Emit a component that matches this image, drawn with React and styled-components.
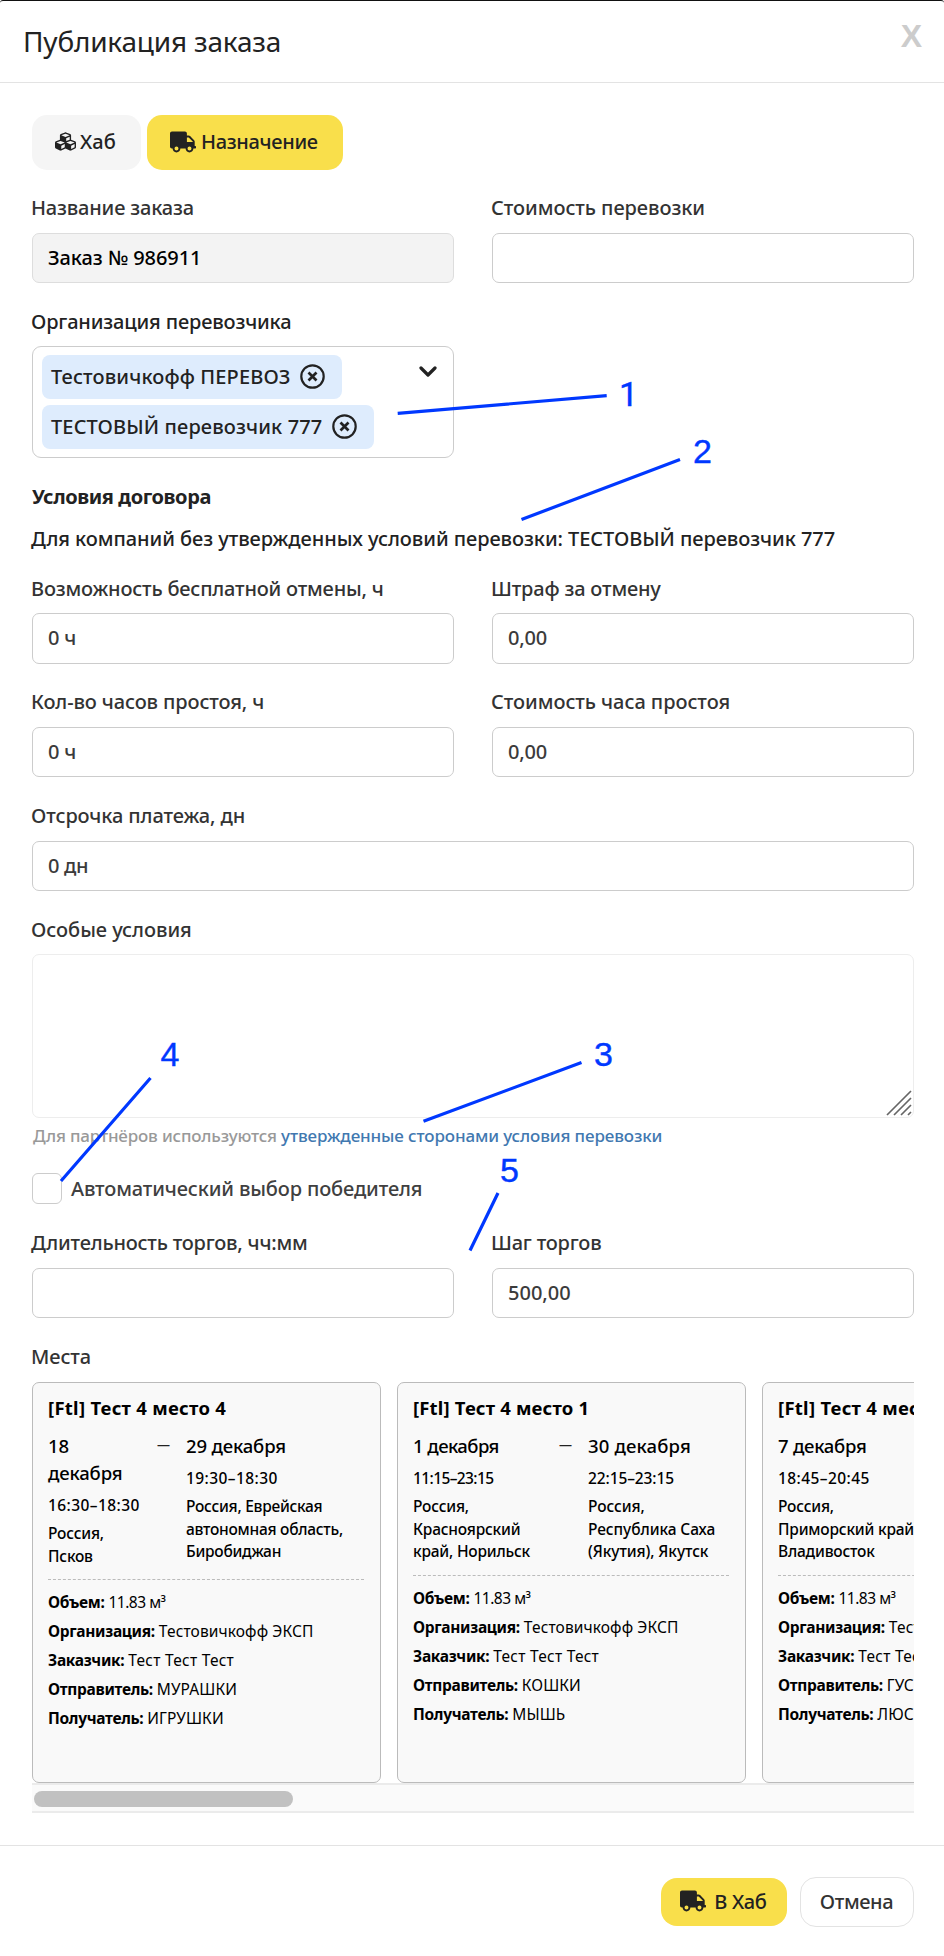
import React from "react";
import styled, { createGlobalStyle, css } from "styled-components";
import { FaCubes, FaTruck } from "react-icons/fa";

const GlobalStyle = createGlobalStyle`
  *, *::before, *::after { box-sizing: border-box; }
  body {
    margin: 0;
    background: #fff;
    color: #333;
    font-family: "Noto Sans", "Open Sans", sans-serif;
    font-weight: 500;
  }
`;

const tracked = css`
  letter-spacing: ${({ $ls = -0.17 }) => $ls}px;
  white-space: nowrap;
`;

const Modal = styled.main`
  position: relative;
  width: 944px;
  height: 1956px;
  border-top: 1px solid #111;
  border-radius: 3px 3px 0 0;
  overflow: hidden;
`;

const Header = styled.header`
  display: flex;
  justify-content: space-between;
  align-items: flex-start;
  height: 82px;
  padding: 12px 22px 0 23px;
  border-bottom: 1px solid #e3e3e3;
`;

const Title = styled.h1`
  margin: 0;
  font-size: 28px;
  font-weight: 400;
  line-height: 56px;
  color: #222;
  letter-spacing: -0.2px;
`;

const CloseButton = styled.button`
  padding: 0;
  border: 0;
  background: none;
  font: 700 32px/46px "Liberation Sans", Arial, sans-serif;
  color: #ccc;
`;

const Body = styled.section`
  display: flex;
  flex-direction: column;
  padding: 32px 30px 32px 32px;
`;

const Tabs = styled.div`
  display: flex;
  gap: 6px;
`;

const Tab = styled.button`
  display: flex;
  align-items: center;
  justify-content: flex-start;
  gap: ${({ $gap }) => $gap}px;
  width: ${({ $width }) => $width}px;
  height: 55px;
  padding: 0 0 2px 23px;
  border: 0;
  border-radius: 15px;
  background: ${({ $active }) => ($active ? "#f9df4b" : "#f5f5f5")};
  color: #222;
  font: 500 20px "Noto Sans", sans-serif;
  ${tracked}
`;

const Columns = styled.div`
  display: grid;
  grid-template-columns: 422px 422px;
  column-gap: 38px;
  margin-top: ${({ $top = 28 }) => $top}px;
`;

const FieldBox = styled.div`
  display: flex;
  flex-direction: column;
  gap: ${({ $gap = 16 }) => $gap}px;
  margin-top: ${({ $top = 0 }) => $top}px;
`;

const Label = styled.label`
  height: 20px;
  margin-left: -1px;
  font-size: 20px;
  line-height: 22px;
  color: ${({ $dark }) => ($dark ? "#222" : "#333")};
  ${tracked}
`;

const Input = styled.div`
  display: flex;
  align-items: center;
  height: ${({ $height = 50 }) => $height}px;
  padding: 0 15px ${({ $height = 50 }) => ($height > 50 ? 3 : 1)}px;
  border: 1px solid ${({ $disabled }) => ($disabled ? "#ddd" : "#ccc")};
  border-radius: 7px;
  background: ${({ $disabled }) => ($disabled ? "#f3f3f3" : "#fff")};
  color: ${({ $disabled }) => ($disabled ? "#000" : "#3b3b3b")};
  font-size: 20px;
  ${tracked}
`;

const Select = styled.div`
  display: flex;
  justify-content: space-between;
  height: 112px;
  padding: 8px 16px 8px 9px;
  border: 1px solid #ccc;
  border-radius: 9px;
  color: #222;
`;

const Chips = styled.div`
  display: flex;
  flex-direction: column;
  align-items: flex-start;
  gap: 6px;
`;

const Chip = styled.div`
  display: flex;
  align-items: center;
  gap: 10px;
  height: 44px;
  padding: 0 17px 2px 9px;
  border-radius: 8px;
  background: #deecfd;
  font-size: 20px;
  ${tracked}
`;

const Chevron = styled.svg`
  margin-top: 10px;
`;

const Heading = styled.h2`
  height: 20px;
  margin: 28px 0 0;
  font-size: 20px;
  font-weight: 700;
  line-height: 22px;
  color: #222;
  letter-spacing: -0.4px;
`;

const Note = styled.p`
  height: 20px;
  margin: 22px 0 0 -1px;
  font-size: 20px;
  line-height: 22px;
  color: #222;
  white-space: nowrap;
  letter-spacing: -0.06px;
`;

const TextArea = styled.div`
  display: flex;
  justify-content: flex-end;
  align-items: flex-end;
  height: 164px;
  padding: 0 1px 1px 0;
  border: 1px solid #ededed;
  border-radius: 7px;
`;

const Hint = styled.p`
  height: 17px;
  margin: 9px 0 0 1px;
  font-size: 17px;
  line-height: 17px;
  color: #999;
  white-space: nowrap;
  letter-spacing: -0.17px;
`;

const HintLink = styled.a`
  color: #4178b0;
  letter-spacing: -0.12px;
`;

const CheckRow = styled.label`
  display: flex;
  align-items: center;
  gap: 9px;
  height: 31px;
  margin-top: 29px;
  font-size: 20px;
  line-height: 20px;
  color: #404040;
  ${tracked}
`;

const CheckBox = styled.span`
  width: 30px;
  height: 31px;
  border: 1px solid #ccc;
  border-radius: 6px;
`;

const Scroller = styled.div`
  overflow: hidden;
`;

const Cards = styled.div`
  display: flex;
  gap: 16px;
  height: 401px;
`;

const CardBox = styled.article`
  flex: 0 0 349px;
  padding: 11px 16px 0 15px;
  border: 1px solid #bbb;
  border-radius: 7px;
  background: #f9f9f9;
  color: #000;
`;

const CardTitle = styled.h3`
  margin: 0 0 11px;
  font-size: 18.5px;
  font-weight: 700;
  line-height: 27px;
  ${tracked}
`;

const Route = styled.div`
  display: grid;
  grid-template-columns: ${({ $columns }) => $columns};
  padding-bottom: 12px;
  border-bottom: 1px dashed #bbb;
`;

const Dash = styled.span`
  font-size: 13px;
  line-height: 24px;
  color: #222;
`;

const DateLine = styled.div`
  font-size: 18.5px;
  line-height: 27px;
  white-space: pre-line;
  letter-spacing: ${({ $ls = -0.15 }) => $ls}px;
`;

const TimeLine = styled.div`
  margin-top: 7px;
  font-size: 15.5px;
  line-height: 24px;
  ${tracked}
`;

const Address = styled.div`
  margin-top: 5px;
  font-size: 15.5px;
  line-height: 22.7px;
  white-space: pre;
  letter-spacing: ${({ $ls = -0.2 }) => $ls}px;
`;

const Facts = styled.dl`
  margin: 0;
  padding-top: 8px;
`;

const Fact = styled.div`
  display: flex;
  gap: 4px;
  font-size: 15.5px;
  line-height: 29px;
  white-space: nowrap;
`;

const FactName = styled.dt`
  font-weight: 700;
  letter-spacing: -0.31px;
`;

const FactValue = styled.dd`
  margin: 0;
  font-weight: 400;
  letter-spacing: ${({ $ls = 0.12 }) => $ls}px;
`;

const ScrollTrack = styled.div`
  height: 30px;
  padding: 6px 2px;
  border: solid #ebebeb;
  border-width: 2px 0;
  background: #fafafa;
`;

const ScrollThumb = styled.div`
  width: 259px;
  height: 16px;
  border-radius: 8px;
  background: #c1c1c1;
`;

const Footer = styled.footer`
  display: flex;
  justify-content: flex-end;
  align-items: center;
  gap: 13px;
  padding: 31px 30px 0 0;
  border-top: 1px solid #e3e3e3;
`;

const Button = styled.button`
  display: flex;
  align-items: center;
  justify-content: center;
  gap: 8px;
  width: ${({ $primary }) => ($primary ? 126 : 114)}px;
  height: ${({ $primary }) => ($primary ? 48 : 50)}px;
  padding: 0 1px 2px 0;
  border: ${({ $primary }) => ($primary ? "0" : "1px solid #e3e3e3")};
  border-radius: 16px;
  background: ${({ $primary }) => ($primary ? "#f9df4b" : "#fff")};
  color: ${({ $primary }) => ($primary ? "#222" : "#333")};
  font: 500 20px "Noto Sans", sans-serif;
  ${tracked}
`;

const Markup = styled.svg`
  position: absolute;
  top: -1px;
  left: 0;
  pointer-events: none;
  stroke: #0038ff;
  stroke-width: 3.2;
`;

const MarkNumber = styled.text`
  font: 400 34px ${({ $family = "Liberation Sans" }) => `"${$family}"`}, Arial, sans-serif;
  fill: #0038ff;
  stroke: #0038ff;
  stroke-width: 0.4;
`;

function Field({ label, ls, gap, top, height, value, valueLs, disabled }) {
  return (
    <FieldBox $gap={gap} $top={top}>
      <Label $ls={ls}>{label}</Label>
      <Input $height={height} $disabled={disabled} $ls={valueLs}>{value}</Input>
    </FieldBox>
  );
}

function Carrier({ name }) {
  return (
    <Chip $ls={0.13}>
      {name}
      <svg width="25" height="25" viewBox="0 0 25 25" fill="none" stroke="#222">
        <circle cx="12.5" cy="12.5" r="11.2" strokeWidth="2.2" />
        <path d="M8.5 8.5l8 8M16.5 8.5l-8 8" strokeWidth="2.7" />
      </svg>
    </Chip>
  );
}

function Stop({ date, dateLs, time, timeLs, address, addressLs }) {
  return (
    <div>
      <DateLine $ls={dateLs}>{date}</DateLine>
      <TimeLine $ls={timeLs}>{time}</TimeLine>
      <Address $ls={addressLs}>{address}</Address>
    </div>
  );
}

function PlaceCard({ title, titleLs, columns, from, to, customer, sender, receiver }) {
  return (
    <CardBox>
      <CardTitle $ls={titleLs}>{title}</CardTitle>
      <Route $columns={columns}>
        <Stop {...from} />
        {to && <Dash>—</Dash>}
        {to && <Stop {...to} />}
      </Route>
      <Facts>
        <Fact><FactName>Объем:</FactName><FactValue $ls={-0.5}>11.83 м³</FactValue></Fact>
        <Fact><FactName>Организация:</FactName><FactValue>Тестовичкофф ЭКСП</FactValue></Fact>
        <Fact><FactName>Заказчик:</FactName><FactValue $ls={0.25}>{customer}</FactValue></Fact>
        <Fact><FactName>Отправитель:</FactName><FactValue>{sender}</FactValue></Fact>
        <Fact><FactName>Получатель:</FactName><FactValue>{receiver}</FactValue></Fact>
      </Facts>
    </CardBox>
  );
}

const places = [
  {
    title: "[Ftl] Тест 4 место 4",
    titleLs: 0.27,
    columns: "109px 29px 1fr",
    from: { date: "18\nдекабря", time: "16:30–18:30", timeLs: 0.42, address: "Россия,\nПсков" },
    to: { date: "29 декабря", time: "19:30–18:30", timeLs: 0.42, address: "Россия, Еврейская\nавтономная область,\nБиробиджан", addressLs: -0.26 },
    customer: "Тест Тест Тест",
    sender: "МУРАШКИ",
    receiver: "ИГРУШКИ",
  },
  {
    title: "[Ftl] Тест 4 место 1",
    titleLs: 0.17,
    columns: "146px 29px 1fr",
    from: { date: "1 декабря", dateLs: -0.55, time: "11:15–23:15", timeLs: -0.6, address: "Россия,\nКрасноярский\nкрай, Норильск" },
    to: { date: "30 декабря", dateLs: 0.15, time: "22:15–23:15", timeLs: -0.1, address: "Россия,\nРеспублика Саха\n(Якутия), Якутск", addressLs: -0.08 },
    customer: "Тест Тест Тест",
    sender: "КОШКИ",
    receiver: "МЫШЬ",
  },
  {
    title: "[Ftl] Тест 4 место 2",
    titleLs: 0.27,
    columns: "1fr",
    from: { date: "7 декабря", dateLs: -0.25, time: "18:45–20:45", timeLs: 0.42, address: "Россия,\nПриморский край,\nВладивосток" },
    customer: "Тест Тест Тест",
    sender: "ГУСИ",
    receiver: "ЛЮСЯ",
  },
];

export default function App() {
  return (
    <>
      <GlobalStyle />
      <Modal>
        <Header>
          <Title>Публикация заказа</Title>
          <CloseButton>X</CloseButton>
        </Header>
        <Body>
          <Tabs>
            <Tab $width={109} $gap={4} $ls={0.17}><FaCubes size={21} />Хаб</Tab>
            <Tab $width={196} $gap={5} $ls={-0.32} $active><FaTruck size={26} />Назначение</Tab>
          </Tabs>
          <Columns $top={27}>
            <Field label="Название заказа" value="Заказ № 986911" valueLs={-0.08} disabled />
            <Field label="Стоимость перевозки" ls={-0.06} />
          </Columns>
          <Columns>
            <FieldBox $gap={15}>
              <Label $dark $ls={-0.16}>Организация перевозчика</Label>
              <Select>
                <Chips>
                  <Carrier name="Тестовичкофф ПЕРЕВОЗ" />
                  <Carrier name="ТЕСТОВЫЙ перевозчик 777" />
                </Chips>
                <Chevron width="18" height="13" viewBox="0 0 18 13" fill="none" stroke="#222" strokeWidth="3.2" strokeLinecap="round" strokeLinejoin="round">
                  <path d="M2 3l7 7 7-7" />
                </Chevron>
              </Select>
            </FieldBox>
          </Columns>
          <Heading>Условия договора</Heading>
          <Note>Для компаний без утвержденных условий перевозки: ТЕСТОВЫЙ перевозчик 777</Note>
          <Columns $top={30}>
            <Field label="Возможность бесплатной отмены, ч" ls={-0.2} gap={15} height={51} value="0 ч" />
            <Field label="Штраф за отмену" ls={-0.18} gap={15} height={51} value="0,00" />
          </Columns>
          <Columns $top={27}>
            <Field label="Кол-во часов простоя, ч" ls={-0.12} value="0 ч" />
            <Field label="Стоимость часа простоя" ls={-0.06} value="0,00" />
          </Columns>
          <Field top={28} label="Отсрочка платежа, дн" ls={-0.1} value="0 дн" valueLs={-0.35} />
          <FieldBox $top={28} $gap={15}>
            <Label $ls={-0.04}>Особые условия</Label>
            <TextArea>
              <svg width="26" height="26" viewBox="0 0 26 26" stroke="#666" strokeWidth="1.7">
                <path d="M1 25L25 1M8 25L25 8M15 25L25 15M22 25L25 22" />
              </svg>
            </TextArea>
          </FieldBox>
          <Hint>Для партнёров используются <HintLink>утвержденные сторонами условия перевозки</HintLink></Hint>
          <CheckRow $ls={-0.14}><CheckBox />Автоматический выбор победителя</CheckRow>
          <Columns>
            <Field label="Длительность торгов, чч:мм" ls={-0.21} />
            <Field label="Шаг торгов" ls={-0.2} value="500,00" valueLs={0} />
          </Columns>
          <FieldBox $top={28}>
            <Label $ls={-0.1}>Места</Label>
            <Scroller>
              <Cards>
                {places.map((place) => <PlaceCard key={place.title} {...place} />)}
              </Cards>
              <ScrollTrack><ScrollThumb /></ScrollTrack>
            </Scroller>
          </FieldBox>
        </Body>
        <Footer>
          <Button $primary $ls={-0.3}><FaTruck size={26} />В Хаб</Button>
          <Button $ls={-0.4}>Отмена</Button>
        </Footer>
        <Markup width="944" height="1956" viewBox="0 0 944 1956">
          <path d="M397.7 413.3L606.7 395.7M521.5 519.5L680 459.5M423.5 1121.3L581.5 1062.5M61 1181L150.5 1078M470 1250.5L498 1193" />
          <MarkNumber x="619" y="405.5" $family="Roboto">1</MarkNumber>
          <MarkNumber x="693" y="462.5">2</MarkNumber>
          <MarkNumber x="594" y="1065.5">3</MarkNumber>
          <MarkNumber x="160.5" y="1066">4</MarkNumber>
          <MarkNumber x="500" y="1182">5</MarkNumber>
        </Markup>
      </Modal>
    </>
  );
}
